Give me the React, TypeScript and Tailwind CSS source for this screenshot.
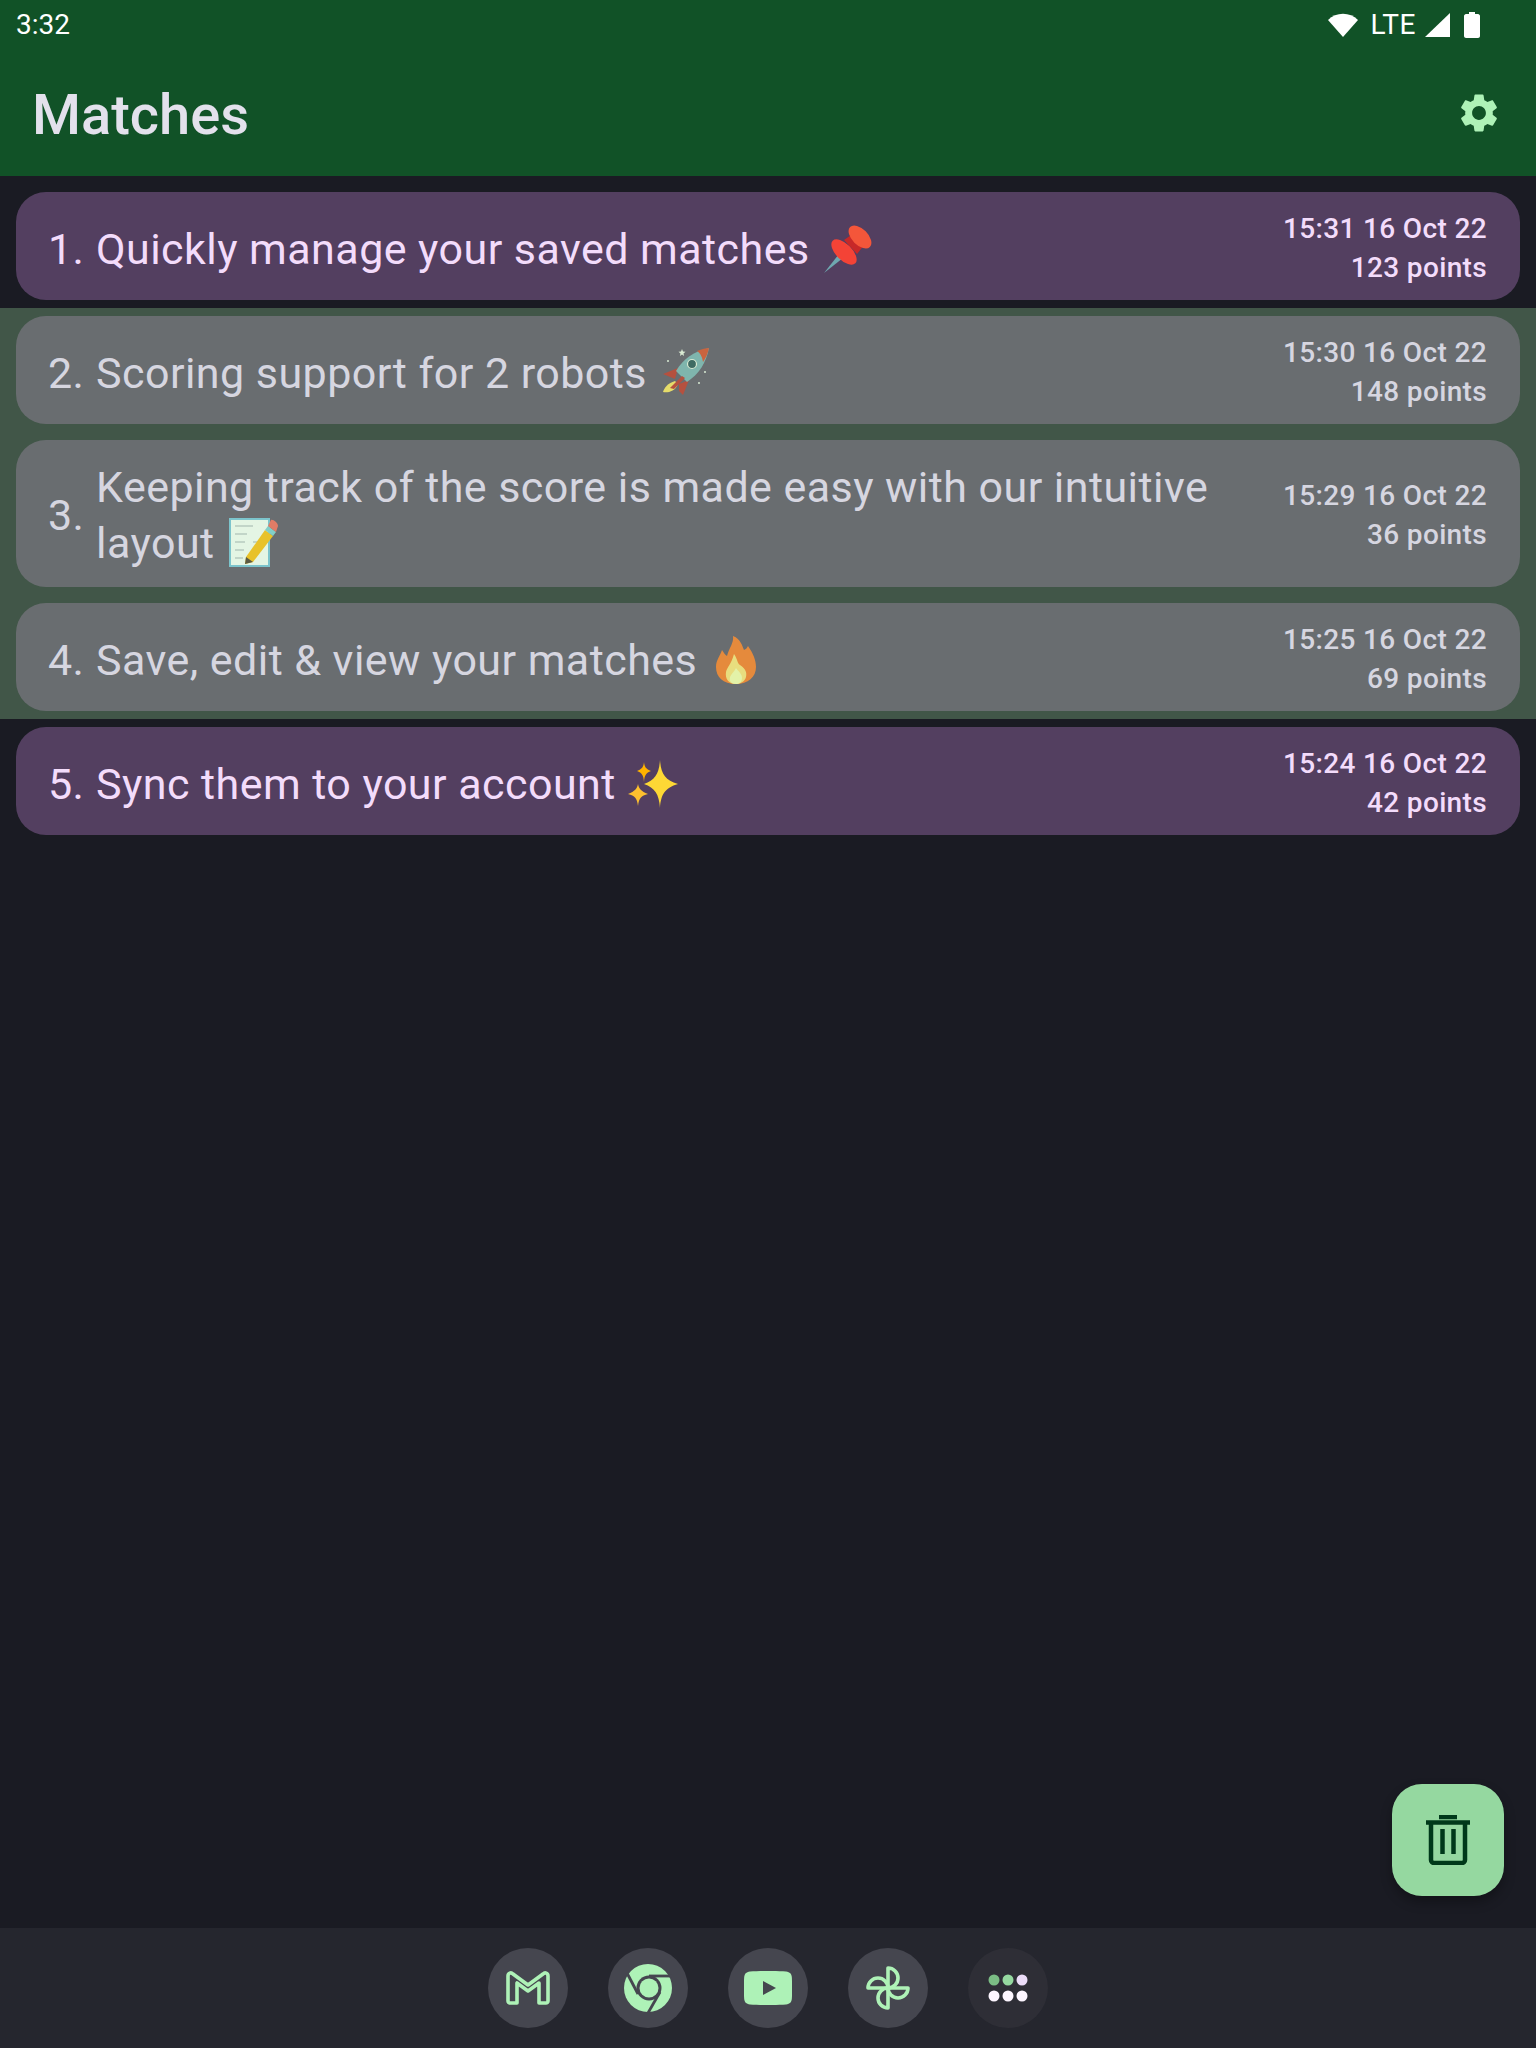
import type { ReactNode } from "react";

const gearPath =
  "M19.14 12.94c.04-.3.06-.61.06-.94 0-.32-.02-.64-.07-.94l2.03-1.58c.18-.14.23-.41.12-.61l-1.92-3.32c-.12-.22-.37-.29-.59-.22l-2.39.96c-.5-.38-1.03-.7-1.62-.94l-.36-2.54c-.04-.24-.24-.41-.48-.41h-3.84c-.24 0-.43.17-.47.41l-.36 2.54c-.59.24-1.13.57-1.62.94l-2.39-.96c-.22-.08-.47 0-.59.22L2.74 8.87c-.12.21-.08.47.12.61l2.03 1.58c-.05.3-.09.63-.09.94s.02.64.07.94l-2.03 1.58c-.18.14-.23.41-.12.61l1.92 3.32c.12.22.37.29.59.22l2.39-.96c.5.38 1.03.7 1.62.94l.36 2.54c.05.24.24.41.48.41h3.84c.24 0 .44-.17.47-.41l.36-2.54c.59-.24 1.13-.56 1.62-.94l2.39.96c.22.08.47 0 .59-.22l1.92-3.32c.12-.22.07-.47-.12-.61l-2.01-1.58zM12 15.6c-1.98 0-3.6-1.62-3.6-3.6s1.62-3.6 3.6-3.6 3.6 1.62 3.6 3.6-1.62 3.6-3.6 3.6z";

function PinEmoji() {
  return (
    <svg viewBox="0 0 48 48" className="inline-block w-[48px] h-[48px] align-[-9px] ml-[3px]">
      <path d="M0 48 L15 29 L19 33 Z" fill="#6fa8b0" />
      <ellipse cx="20" cy="27" rx="8" ry="16" transform="rotate(-45 20 27)" fill="#f44336" />
      <path d="M20 15 L30 8 L41 19 L33 29 Z" fill="#c62828" />
      <ellipse cx="36" cy="12" rx="8" ry="14" transform="rotate(-45 36 12)" fill="#f4563a" />
    </svg>
  );
}

function RocketEmoji() {
  return (
    <svg viewBox="0 0 50 50" className="inline-block w-[50px] h-[50px] align-[-9px] ml-[3px]">
      <path d="M17 21 L2 27 L14 32 Z" fill="#b5513f" />
      <path d="M28 33 L22 48 L18 44 L18 37 Z" fill="#b5513f" />
      <path d="M14 34 C7 36 3 41 2 45 C6 46 14 45 17 37 Z" fill="#e6dc6a" />
      <path d="M15 24 C22 12 32 5 48 1 C45 16 38 27 26 35 Z" fill="#7fb5ad" />
      <path d="M36 4 C41 2 45 1 48 1 C47 6 45 11 42 15 C41 9 39 6 36 4 Z" fill="#c9643f" />
      <path d="M9 41 L21 29 L24 31 L13 42 Z" fill="#b5513f" />
      <circle cx="31" cy="17" r="4.5" fill="#3f6b63" stroke="#d9ead3" strokeWidth="1.2" />
      <path d="M21 2 l1 2.5 2.5.3-2 1.6.6 2.6-2.1-1.4-2.1 1.4.6-2.6-2-1.6 2.5-.3z" fill="#d9ead3" />
      <circle cx="7" cy="14" r="1" fill="#d9ead3" />
      <circle cx="44" cy="25" r="1" fill="#d9ead3" />
      <circle cx="38" cy="36" r="1" fill="#d9ead3" />
    </svg>
  );
}

function MemoEmoji() {
  return (
    <svg viewBox="0 0 50 50" className="inline-block w-[50px] h-[50px] align-[-9px] ml-[3px]">
      <rect x="1" y="2" width="39" height="47" fill="#e4f5e4" stroke="#7cc4cc" strokeWidth="2" />
      <path d="M6 9h18M6 17h12M6 25h10M6 33h9M6 41h8M24 25h10" stroke="#9fb5ac" strokeWidth="1.2" />
      <path d="M17 40 L36 13 L44 19 L24 45 L16 47 Z" fill="#e8c22a" />
      <path d="M16 47 L17 40 L24 45 Z" fill="#5a5a44" />
      <path d="M36 13 L39 9 L47 15 L44 19 Z" fill="#82cfc8" />
      <path d="M39 9 L42 3 C44 2 49 6 49 9 L47 15 Z" fill="#e07c66" />
    </svg>
  );
}

function FireEmoji() {
  return (
    <svg viewBox="0 0 42 48" className="inline-block w-[42px] h-[48px] align-[-9px] ml-[7px]">
      <path d="M21 48 C8 48 1 41 1 31 C1 24 5 20 7 14 C9 17 10 19 12 20 C14 12 19 7 18 0 C26 3 27 10 29 14 C31 13 32 12 33 10 C38 17 41 24 41 31 C41 41 33 48 21 48 Z" fill="#e58a3c" />
      <path d="M21 48 C13 48 10 42 11 36 C12 31 16 29 19 18 C23 24 22 27 25 29 C31 33 32 37 31 41 C30 45 26 48 21 48 Z" fill="#e8dd7e" />
      <path d="M21 48 C16 48 14 45 15 41 C16 38 19 36 21 32 C24 36 27 38 27 42 C27 46 24 48 21 48 Z" fill="#e3f2a8" />
    </svg>
  );
}

function SparklesEmoji() {
  return (
    <svg viewBox="0 0 50 48" className="inline-block w-[50px] h-[48px] align-[-9px] ml-[1px]">
      <path d="M32 0 C33 14 37 20 50 24 C37 28 33 34 32 48 C31 34 27 28 16 24 C27 20 31 14 32 0 Z" fill="#fdd835" />
      <path d="M16 2 C16.5 7 18 9 23 11 C18 13 16.5 15 16 22 C15.500 15 14 13 9 11 C14 9 15.500 7 16 2 Z" fill="#ffb300" />
      <path d="M10 24 C11 29 13 31 20 34 C13 36 11 38 10 46 C9 38 7 36 0 34 C7 31 9 29 10 24 Z" fill="#fdc02f" />
    </svg>
  );
}

function GmailIcon() {
  return (
    <svg viewBox="0 0 44 34" className="w-[44px] h-[34px]">
      <path
        d="M2 5 C2 2 5 1 7 3 L22 14 L37 3 C39 1 42 2 42 5 V30 C42 31 41 32 40 32 H33 V12 L22 20 L11 12 V32 H4 C3 32 2 31 2 30 Z"
        fill="none"
        stroke="#aef2b7"
        strokeWidth="3.600"
        strokeLinejoin="round"
      />
    </svg>
  );
}

function ChromeIcon() {
  return (
    <svg viewBox="0 0 48 48" className="w-[48px] h-[48px]">
      <circle cx="24" cy="24" r="24" fill="#aef2b7" />
      <circle cx="25" cy="24" r="12.500" fill="#45464f" />
      <circle cx="25" cy="24" r="9.500" fill="#aef2b7" />
      <path d="M25 12 L48 12" stroke="#45464f" strokeWidth="2.800" />
      <path d="M14 30 L3 9" stroke="#45464f" strokeWidth="2.800" />
      <path d="M36 28 L24 49" stroke="#45464f" strokeWidth="2.800" />
    </svg>
  );
}

function YoutubeIcon() {
  return (
    <svg viewBox="0 0 48 34" className="w-[48px] h-[34px]">
      <path
        d="M6 0.500 C16 -0.200 32 -0.200 42 0.500 C46 1 47.500 3 47.800 6 C48.300 13 48.300 21 47.800 28 C47.500 31 46 33 42 33.500 C32 34.200 16 34.200 6 33.500 C2 33 0.500 31 0.200 28 C-0.300 21 -0.300 13 0.200 6 C0.500 3 2 1 6 0.500 Z"
        fill="#aef2b7"
      />
      <path d="M19 10 L32 17 L19 24 Z" fill="#45464f" />
    </svg>
  );
}

function PinwheelIcon() {
  return (
    <svg viewBox="0 0 44 44" className="w-[44px] h-[44px]" fill="none" stroke="#aef2b7" strokeWidth="3.600" strokeLinejoin="round">
      <path d="M22 22 V2 A10 10 0 0 1 22 22 Z" />
      <path d="M22 22 H42 A10 10 0 0 1 22 22 Z" />
      <path d="M22 22 V42 A10 10 0 0 1 22 22 Z" />
      <path d="M22 22 H2 A10 10 0 0 1 22 22 Z" />
    </svg>
  );
}

function AppsIcon() {
  return (
    <svg viewBox="0 0 40 28" className="w-[40px] h-[28px]">
      <circle cx="6" cy="6" r="5.500" fill="#7bbd85" />
      <circle cx="20" cy="6" r="5.500" fill="#95d8a0" />
      <circle cx="34" cy="6" r="5.500" fill="#ecdcf8" />
      <circle cx="6" cy="22" r="5.500" fill="#fdf6ff" />
      <circle cx="20" cy="22" r="5.500" fill="#fdf6ff" />
      <circle cx="34" cy="22" r="5.500" fill="#fdf6ff" />
    </svg>
  );
}

type Match = {
  num: string;
  title: ReactNode;
  time: string;
  points: string;
  selected?: boolean;
};

const matches: Match[] = [
  { num: "1.", title: <>Quickly manage your saved matches <PinEmoji /></>, time: "15:31 16 Oct 22", points: "123 points" },
  { num: "2.", title: <>Scoring support for 2 robots <RocketEmoji /></>, time: "15:30 16 Oct 22", points: "148 points", selected: true },
  { num: "3.", title: <>Keeping track of the score is made easy with our intuitive layout <MemoEmoji /></>, time: "15:29 16 Oct 22", points: "36 points", selected: true },
  { num: "4.", title: <>Save, edit &amp; view your matches <FireEmoji /></>, time: "15:25 16 Oct 22", points: "69 points", selected: true },
  { num: "5.", title: <>Sync them to your account <SparklesEmoji /></>, time: "15:24 16 Oct 22", points: "42 points" },
];

function MatchRow({ match }: { match: Match }) {
  const tall = match.num === "3.";
  return (
    <div className={match.selected ? "px-4 py-2 bg-[#415648]" : "px-4 py-2"}>
      <div
        className={
          (match.selected ? "bg-[#696d70] text-[#d6d6e0] " : "bg-[#533f60] text-[#f3dcfb] ") +
          (tall ? "h-[147px] " : "h-[108px] ") +
          "flex items-center rounded-[30px] pl-[32px] pr-[33px]"
        }
      >
        <span className={(tall ? "pt-[3px] " : "pt-[5px] ") + "shrink-0 w-[48px] text-[43px] leading-[56px] tracking-[0.4px]"}>{match.num}</span>
        <div className={(tall ? "pt-[3px] " : "pt-[5px] ") + "flex-1 pr-[60px] text-[43px] leading-[56px] tracking-[0.45px]"}>{match.title}</div>
        <div className="shrink-0 pt-[3px] text-right text-[28px] leading-[39px] tracking-[0.35px] font-medium">
          <div>{match.time}</div>
          <div>{match.points}</div>
        </div>
      </div>
    </div>
  );
}

export default function App() {
  return (
    <div className="relative flex flex-col h-[2048px] bg-[#1a1b23] font-['Roboto',sans-serif]">
      <header className="h-[176px] bg-[#115227]">
        <div className="h-[50px] flex items-center justify-between pl-4 pr-[56px] text-white text-[28px]">
          <span>3:32</span>
          <div className="flex items-center">
            <svg viewBox="0 0 30 24" className="w-[30px] h-[24px]">
              <path d="M0 7 C8 -1.500 22 -1.500 30 7 L15 24 Z" fill="#fff" />
            </svg>
            <span className="ml-[13px] text-[28px] leading-none tracking-[0.5px]">LTE</span>
            <svg viewBox="0 0 25 24" className="ml-[9px] w-[25px] h-[24px]">
              <path d="M25 0 V24 H0 Z" fill="#fff" />
            </svg>
            <svg viewBox="0 0 16 26" className="ml-[14px] w-[16px] h-[26px]">
              <path d="M5 0 H11 V2 H14 C15 2 16 3 16 4 V24 C16 25 15 26 14 26 H2 C1 26 0 25 0 24 V4 C0 3 1 2 2 2 H5 Z" fill="#fff" />
            </svg>
          </div>
        </div>
        <div className="h-[126px] flex items-start justify-between pl-[32px] pr-[34px] pt-[33px]">
          <h1 className="text-[56px] leading-[64px] font-medium text-[#e3e1ec]">Matches</h1>
          <svg viewBox="0 0 24 24" className="w-[46px] h-[46px] mt-[7px]">
            <path d={gearPath} fill="#aef2b7" />
          </svg>
        </div>
      </header>

      <main className="flex-1 py-2">
        {matches.map((m) => (
          <MatchRow key={m.num} match={m} />
        ))}
      </main>

      <button className="absolute right-[32px] bottom-[152px] w-[112px] h-[112px] rounded-[30px] bg-[#95d8a0] flex items-center justify-center shadow-[0_6px_12px_rgba(0,0,0,0.3)]">
        <svg viewBox="0 0 44 50" className="w-[44px] h-[50px]" fill="none" stroke="#00391a" strokeWidth="4.500">
          <path d="M0 7.500 H44" />
          <path d="M13 2 H31" />
          <path d="M5 8 V45 C5 46.500 6.500 48 8 48 H36 C37.500 48 39 46.500 39 45 V8" />
          <path d="M16.500 14 V39 M27.500 14 V39" />
        </svg>
      </button>

      <footer className="h-[120px] bg-[#25262e] flex items-center justify-center gap-10">
        <div className="w-20 h-20 rounded-full bg-[#45464f] flex items-center justify-center"><GmailIcon /></div>
        <div className="w-20 h-20 rounded-full bg-[#45464f] flex items-center justify-center"><ChromeIcon /></div>
        <div className="w-20 h-20 rounded-full bg-[#45464f] flex items-center justify-center"><YoutubeIcon /></div>
        <div className="w-20 h-20 rounded-full bg-[#45464f] flex items-center justify-center"><PinwheelIcon /></div>
        <div className="w-20 h-20 rounded-full bg-[#2e2e36] flex items-center justify-center"><AppsIcon /></div>
      </footer>
    </div>
  );
}
